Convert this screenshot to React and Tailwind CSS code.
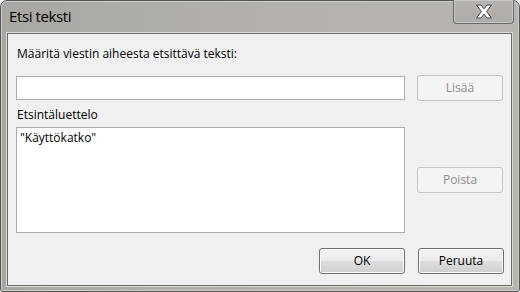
import React from "react";

const font = { fontFamily: '"Open Sans", "Noto Sans", sans-serif' };

function DisabledButton({ children }) {
  return (
    <div className="w-[86px] h-[26px] flex items-center justify-center rounded-[3px] border border-[#c2c4c6] bg-[#f4f4f4] text-[12px] text-[#8d8d8d]">
      {children}
    </div>
  );
}

function Button({ children }) {
  return (
    <div className="w-[86px] h-[26px] flex items-center justify-center rounded-[3px] border border-[#707070] bg-[linear-gradient(#f3f3f3_0%,#ebebeb_50%,#dddddd_52%,#cfcfcf_100%)] shadow-[inset_0_0_0_1px_#fbfbfb] text-[12px] text-black">
      {children}
    </div>
  );
}

export default function App() {
  return (
    <div className="w-[520px] h-[292px] bg-white" style={font}>
      <div className="w-[520px] h-[292px] flex flex-col border border-[#555555] rounded-t-[7px] rounded-b-[3px] bg-[linear-gradient(90deg,#a9a7a4_0%,#b3b0ad_50%,#b8b5b1_100%)] shadow-[inset_0_0_0_1px_#cfcdca]">
        <div className="h-[32px] flex items-start justify-between pl-[8px] pr-[5px]">
          <div className="mt-[4px] text-[15px] tracking-[-0.4px] text-black">Etsi teksti</div>
          <div className="w-[61px] h-[24px] -mt-px flex items-center justify-center border border-t-0 border-[#6a6a6a] rounded-b-[4px] bg-[linear-gradient(#b6b3b0,#aeaba8)] shadow-[inset_0_0_0_1px_#c9c7c4]">
            <svg width="18" height="15" viewBox="0 0 18 15">
              <path d="M1.5 1 L6 1 L9 4.8 L12 1 L16.5 1 L11.6 7.5 L16.5 14 L12 14 L9 10.2 L6 14 L1.5 14 L6.4 7.5 Z" fill="#ffffff" stroke="#454545" strokeWidth="1" strokeLinejoin="round" />
            </svg>
          </div>
        </div>
        <div className="flex-1 ml-[6px] mr-[7px] mb-[5px] border border-[#6a6a6a] bg-[#f0f0f0] shadow-[0_0_0_1px_#dcdad7] flex flex-col px-[8px] pr-[7px] pt-[12px]">
          <div className="h-[16px] leading-[16px] pl-[1px] text-[12px] text-black">Määritä viestin aiheesta etsittävä teksti:</div>
          <div className="mt-[13px] flex items-center gap-[12px] h-[26px]">
            <div className="w-[389px] h-[24px] border border-[#ababab] bg-white"></div>
            <DisabledButton>Lisää</DisabledButton>
          </div>
          <div className="mt-[6px] h-[16px] leading-[16px] pl-[1px] text-[12px] text-black">Etsintäluettelo</div>
          <div className="mt-[4px] flex gap-[12px]">
            <div className="w-[389px] h-[106px] border border-[#ababab] bg-white px-[3px] pt-[2px] text-[12px] leading-[16px] text-black">"Käyttökatko"</div>
            <div className="pt-[40px]">
              <DisabledButton>Poista</DisabledButton>
            </div>
          </div>
          <div className="mt-[15px] flex justify-end gap-[13px]">
            <Button>OK</Button>
            <Button>Peruuta</Button>
          </div>
        </div>
      </div>
    </div>
  );
}
